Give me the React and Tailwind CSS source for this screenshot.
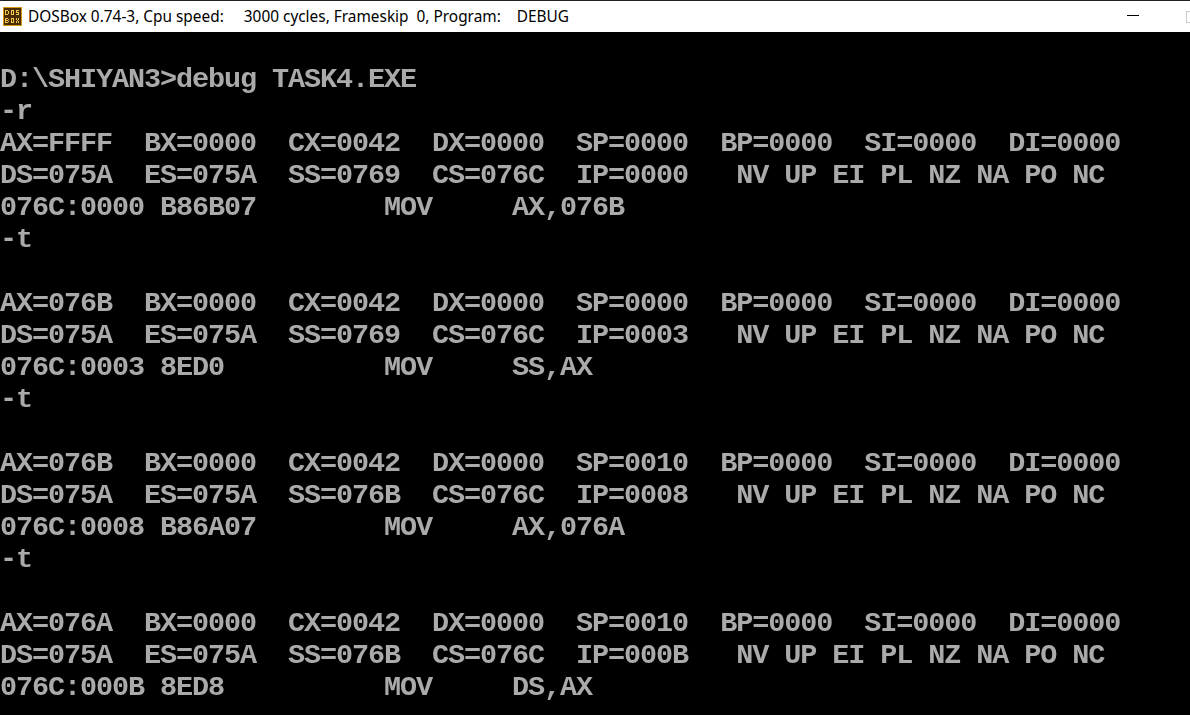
const dump = [
  '',
  'D:\\SHIYAN3>debug TASK4.EXE',
  '-r',
  'AX=FFFF  BX=0000  CX=0042  DX=0000  SP=0000  BP=0000  SI=0000  DI=0000',
  'DS=075A  ES=075A  SS=0769  CS=076C  IP=0000   NV UP EI PL NZ NA PO NC',
  '076C:0000 B86B07        MOV     AX,076B',
  '-t',
  '',
  'AX=076B  BX=0000  CX=0042  DX=0000  SP=0000  BP=0000  SI=0000  DI=0000',
  'DS=075A  ES=075A  SS=0769  CS=076C  IP=0003   NV UP EI PL NZ NA PO NC',
  '076C:0003 8ED0          MOV     SS,AX',
  '-t',
  '',
  'AX=076B  BX=0000  CX=0042  DX=0000  SP=0010  BP=0000  SI=0000  DI=0000',
  'DS=075A  ES=075A  SS=076B  CS=076C  IP=0008   NV UP EI PL NZ NA PO NC',
  '076C:0008 B86A07        MOV     AX,076A',
  '-t',
  '',
  'AX=076A  BX=0000  CX=0042  DX=0000  SP=0010  BP=0000  SI=0000  DI=0000',
  'DS=075A  ES=075A  SS=076B  CS=076C  IP=000B   NV UP EI PL NZ NA PO NC',
  '076C:000B 8ED8          MOV     DS,AX',
]

function DosIcon() {
  return (
    <svg width="19" height="19" viewBox="0 0 19 19" className="shrink-0">
      <rect width="19" height="19" fill="#d39a12" />
      <rect x="1" y="1" width="17" height="17" fill="#4a2c06" />
      <g fill="#f2c84a">
        {/* D */}
        <rect x="2" y="3" width="1" height="5" />
        <rect x="3" y="3" width="2" height="1" />
        <rect x="3" y="7" width="2" height="1" />
        <rect x="5" y="4" width="1" height="3" />
        {/* O */}
        <rect x="8" y="3" width="1" height="5" />
        <rect x="9" y="3" width="1" height="1" />
        <rect x="9" y="7" width="1" height="1" />
        <rect x="10" y="3" width="1" height="5" />
        {/* S */}
        <rect x="13" y="3" width="3" height="1" />
        <rect x="13" y="4" width="1" height="1" />
        <rect x="13" y="5" width="3" height="1" />
        <rect x="15" y="6" width="1" height="1" />
        <rect x="13" y="7" width="3" height="1" />
        {/* B */}
        <rect x="2" y="11" width="1" height="5" />
        <rect x="3" y="11" width="2" height="1" />
        <rect x="3" y="13" width="2" height="1" />
        <rect x="3" y="15" width="2" height="1" />
        <rect x="5" y="12" width="1" height="1" />
        <rect x="5" y="14" width="1" height="1" />
        {/* O */}
        <rect x="8" y="11" width="1" height="5" />
        <rect x="9" y="11" width="1" height="1" />
        <rect x="9" y="15" width="1" height="1" />
        <rect x="10" y="11" width="1" height="5" />
        {/* X */}
        <rect x="13" y="11" width="1" height="2" />
        <rect x="15" y="11" width="1" height="2" />
        <rect x="14" y="13" width="1" height="1" />
        <rect x="13" y="14" width="1" height="2" />
        <rect x="15" y="14" width="1" height="2" />
      </g>
    </svg>
  )
}

export default function App() {
  return (
    <div className="w-[1190px] h-[715px] overflow-hidden flex flex-col bg-black">
      {/* Title bar */}
      <div className="h-8 shrink-0 flex items-center bg-white border-t border-[#222] pl-[3px] relative">
        <DosIcon />
        <span className="ml-[6px] text-[15.4px] text-black whitespace-pre font-['Noto_Sans',sans-serif]">
          {'DOSBox 0.74-3, Cpu speed:     3000 cycles, Frameskip  0, Program:    DEBUG'}
        </span>
        <div className="absolute left-[1127px] top-[14px] w-3 h-px bg-black" />
        <div className="absolute left-[1186px] top-[10px] w-3 h-3 border border-[#ccc]" />
      </div>

      {/* DOS screen */}
      <div className="flex-1 font-['Liberation_Mono',monospace] font-bold text-[28.5px] tracking-[-1.1px] leading-8 text-[#aaaaaa] whitespace-pre blur-[0.6px]">
        {dump.map((line, i) => (
          <div key={i} className="h-8">{line}</div>
        ))}
      </div>
    </div>
  )
}
